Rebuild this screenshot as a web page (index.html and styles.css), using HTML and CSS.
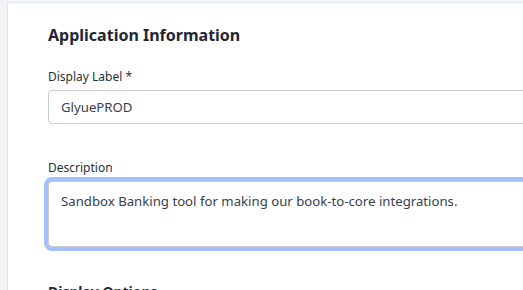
FILE: index.html
```html
<!DOCTYPE html>
<html lang="en">
<head>
    <meta charset="UTF-8">
    <meta name="viewport" content="width=device-width, initial-scale=1.0">
    <title>Application Information</title>
    <link rel="stylesheet" href="styles.css">
</head>
<body>
    <div class="card">
        <h2 class="section-title">Application Information</h2>
        <div class="field">
            <label for="displayLabel">Display Label *</label>
            <input type="text" id="displayLabel" value="GlyuePROD">
        </div>
        <div class="field">
            <label for="description">Description</label>
            <textarea id="description" class="focused">Sandbox Banking tool for making our book-to-core integrations.</textarea>
        </div>
        <h3 class="sub-title">Display Options</h3>
    </div>
</body>
</html>
```

FILE: styles.css
```css
html, body {
    height: 100%;
}
body {
    margin: 0;
    background-color: #f3f4f7;
    font-family: "Noto Sans", "Open Sans", sans-serif;
    color: #1f2937;
    overflow: hidden;
}
.card {
    box-sizing: border-box;
    height: 100%;
    margin: 2px 0 0 7px;
    padding: 21px 0 0 40px;
    background-color: white;
    border-top: 1px solid #e3e6ea;
    border-left: 1px solid #e3e6ea;
}
.section-title {
    margin: 0 0 22px;
    font-size: 16px;
    font-weight: 700;
    color: #1f2733;
}
.field {
    margin-bottom: 35px;
}
label {
    display: block;
    margin-bottom: 5px;
    font-size: 12px;
    color: #2b2f36;
}
input, textarea {
    display: block;
    width: 600px;
    box-sizing: border-box;
    font-family: inherit;
    font-size: 13.2px;
    color: #374151;
    border: 1px solid #c9ccd1;
    border-radius: 4px;
    background: white;
}
input {
    height: 34px;
    padding: 0 12px;
}
textarea {
    height: 66px;
    padding: 10px 12px;
    resize: none;
}
textarea.focused {
    outline: none;
    box-shadow: 0 0 0 4px #a6c0fa;
}
.sub-title {
    margin: 0;
    font-size: 14px;
    font-weight: 700;
}
```
